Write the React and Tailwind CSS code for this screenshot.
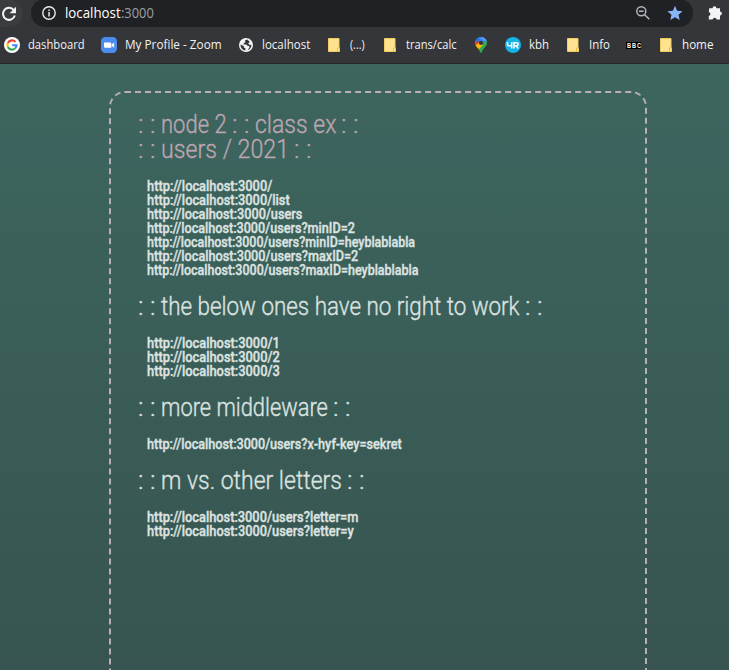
import React, { useLayoutEffect, useRef } from "react";

// Condenses or widens its text so that it takes exactly `w` pixels.
function Fit({ w, children }) {
  const ref = useRef(null);
  useLayoutEffect(() => {
    const el = ref.current;
    el.style.transform = `scaleX(${w / el.offsetWidth})`;
  }, [w]);
  return (
    <span className="block shrink-0" style={{ width: w }}>
      <span ref={ref} className="inline-block origin-left whitespace-pre align-top">
        {children}
      </span>
    </span>
  );
}

function Line({ parts }) {
  return (
    <span className="flex h-[25px] gap-[5px] [-webkit-text-stroke:0.35px]">
      {parts.map(([t, w], i) => (
        <Fit key={i} w={w}>{t}</Fit>
      ))}
    </span>
  );
}

function Links({ items }) {
  return (
    <ul className="my-[17px] pl-[8.500px] text-[15px] leading-[14px] font-medium text-[#dde3e0] [-webkit-text-stroke:0.4px]">
      {items.map(([t, w]) => (
        <li key={t} className="h-[14px]">
          <Fit w={w}>{"http://localhost:3000/" + t}</Fit>
        </li>
      ))}
    </ul>
  );
}

const Folder = () => (
  <svg className="block h-4 w-3 shrink-0" viewBox="0 0 12 16">
    <path d="M.5 1.500h10.500v9.500h.5v3.500h-11z" fill="#ffe391" stroke="#f2cd60" />
    <path d="M9.500 14.500v-3.500h2" fill="none" stroke="#e9bd45" />
  </svg>
);

const Google = () => (
  <svg className="block size-4 shrink-0" viewBox="0 0 16 16">
    <circle cx="8" cy="8" r="8" fill="#fff" />
    <g fill="none" strokeWidth="2.100">
      <path d="M11.500 4.900A4.600 4.600 0 0 0 3.900 6" stroke="#ea4335" />
      <path d="M3.900 6a4.600 4.600 0 0 0 0 4" stroke="#fbbc05" />
      <path d="M3.900 10a4.600 4.600 0 0 0 7.100 1.500" stroke="#34a853" />
      <path d="M11 11.500A4.600 4.600 0 0 0 12.600 8.200H8.200" stroke="#4285f4" />
    </g>
  </svg>
);

const Zoom = () => (
  <svg className="block size-4 shrink-0" viewBox="0 0 16 16">
    <rect width="16" height="16" rx="4.500" fill="#4a8cf0" />
    <path d="M3 5.500h6a1.300 1.300 0 0 1 1.300 1.300v3.900H4.300A1.300 1.300 0 0 1 3 9.400zM10.800 7.200 13.200 5.500v5.200l-2.400-1.700z" fill="#fff" />
  </svg>
);

const Globe = () => (
  <svg className="block size-[14px] shrink-0" viewBox="0 0 14 14">
    <circle cx="7" cy="7" r="7" fill="#f1f3f4" />
    <path d="M8.500 1.600 5.800 2.500 6.500 4.200 5 5 4.300 6.500h3.200l.8 1.200 1.900.3.300 1.600-2 2.600A5.500 5.500 0 0 0 12.400 7l-2-.2-1.200-1.400 1.500-1.300zM1.500 6.500a5.600 5.600 0 0 0 4.800 6l.3-1.900-1.500-.8-.4-1.900z" fill="#35363a" />
  </svg>
);

const Pin = () => (
  <svg className="block h-4 w-3 shrink-0" viewBox="0 0 12 16">
    <clipPath id="pin">
      <path d="M6 0a6 6 0 0 1 6 6c0 4-4.300 5.200-5.200 9.300q-.8 1.400-1.600 0C4.300 11.200 0 10 0 6a6 6 0 0 1 6-6z" />
    </clipPath>
    <g clipPath="url(#pin)">
      <path d="M0 0h12v16H0z" fill="#34a853" />
      <path d="M0 0h12v3L6 7z" fill="#4285f4" />
      <path d="M6 0h6v5L8 3z" fill="#4f9cf8" />
      <path d="M0 1.500 6 6 1 11H0z" fill="#ea4335" />
      <path d="m0 9 5-4 3 3-5 5z" fill="#fbbc04" />
      <path d="M0 0h3l2 3-3 3z" fill="#1a73e8" />
    </g>
    <circle cx="6" cy="5.900" r="2.100" fill="#35363a" />
  </svg>
);

const Yr = () => (
  <svg className="block size-4 shrink-0" viewBox="0 0 16 16">
    <circle cx="8" cy="8" r="8" fill="#14b4e8" />
    <g fill="none" stroke="#fff" strokeWidth="1.500">
      <path d="M2.500 5v2.700q0 1 1 1h3M6.700 5v6.500" />
      <path d="M9 11.500V5.700h2.800q1.400 0 1.400 1.500t-1.400 1.500H9M11 8.700l2.300 2.800" />
    </g>
  </svg>
);

const Bbc = () => (
  <span className="flex h-[7px] w-[15px] shrink-0 justify-center gap-px bg-black font-['Liberation_Sans'] text-[7px] leading-[7px] font-bold text-white">
    <Fit w={4}>B</Fit>
    <Fit w={4}>B</Fit>
    <Fit w={4}>C</Fit>
  </span>
);

// [icon, space before it, space before the label, label, label width]
const bookmarks = [
  [Google, 4, 8, "dashboard", 57],
  [Zoom, 16, 8, "My Profile - Zoom", 97],
  [Globe, 17, 9, "localhost", 48],
  [Folder, 18, 10, "(...)", 15],
  [Folder, 19, 10, "trans/calc", 51],
  [Pin, 18, 0, "", 0],
  [Yr, 18, 8, "kbh", 20],
  [Folder, 18, 10, "Info", 21],
  [Bbc, 16, 0, "", 0],
  [Folder, 19, 10, "home", 31],
];

function Toolbar() {
  return (
    <div className="flex h-[27px] items-start overflow-hidden bg-[#35363a]">
      <div className="-ml-[6px] flex h-[27px] w-[29px] shrink-0 items-center justify-end rounded-r-full bg-[#3b3c40] pr-[6px]">
        <svg className="block size-4" viewBox="0 0 16 16">
          <path d="M12.800 4.200A6 6 0 1 0 13.800 9.500" fill="none" stroke="#f1f3f4" strokeWidth="2" />
          <path d="M15 .8v6.400H8.600z" fill="#f1f3f4" />
        </svg>
      </div>
      <div className="mt-[-1px] ml-2 flex h-7 w-[662px] shrink-0 items-center rounded-full bg-[#202124] pl-[11px]">
        <svg className="block size-[14px]" viewBox="0 0 14 14">
          <circle cx="7" cy="7" r="6.200" fill="none" stroke="#e8eaed" strokeWidth="1.400" />
          <path d="M6.300 6h1.500v4.500H6.300zM6.300 3.400h1.500v1.500H6.300z" fill="#e8eaed" />
        </svg>
        <span className="ml-[9px] flex text-[14px] leading-5 text-white">
          <Fit w={56}>localhost</Fit>
          <span className="flex text-[#9aa0a6]"><Fit w={33}>:3000</Fit></span>
        </span>
        <svg className="ml-auto block size-[14px]" viewBox="0 0 14 14">
          <g fill="none" stroke="#b4b7bb" strokeWidth="1.500">
            <circle cx="5.300" cy="5.300" r="4.500" />
            <path d="m8.700 8.700 4.600 4.600M3 5.300h4.600" />
          </g>
        </svg>
        <svg className="mr-[10px] ml-[17px] block size-4" viewBox="0 0 16 16">
          <path d="m8 .7 2.100 5 5.500.5-4.100 3.600 1.200 5.300L8 12.300l-4.700 2.800 1.200-5.300L.4 6.200l5.500-.5z" fill="#8ab4f8" />
        </svg>
      </div>
      <svg className="mt-[5px] ml-[15px] block size-[15px] shrink-0" viewBox="0 0 15 15">
        <path d="M1.200 3.200h3.400a1.900 1.900 0 1 1 3.800 0H12v3.400a1.900 1.900 0 1 1 0 3.800V14.500H8.700a2.100 2.100 0 0 0-4.100 0H.8V11a2.100 2.100 0 0 0 0-4.100z" fill="#f1f3f4" />
      </svg>
    </div>
  );
}

export default function App() {
  return (
    <div className="flex h-[670px] w-[729px] flex-col overflow-hidden font-['Roboto',sans-serif]">
      <header className="shrink-0 font-['Open_Sans','Noto_Sans',sans-serif]">
        <Toolbar />
        <nav className="flex h-[37px] items-center overflow-hidden border-b border-[#242528] bg-[#35363a] text-[12px] leading-4 text-[#f1f3f4]">
          {bookmarks.map(([Icon, before, gap, label, w], i) => (
            <div key={i} className="flex shrink-0 items-center" style={{ paddingLeft: before, gap }}>
              <Icon />
              {label && <Fit w={w}>{label}</Fit>}
            </div>
          ))}
        </nav>
      </header>
      <div className="min-h-0 flex-1 overflow-hidden bg-linear-to-b from-[#3d665f] to-[#375450] pt-[27px] pl-[109px]">
        <main className="h-[700px] w-[538px] rounded-2xl border-2 border-dashed border-[#b9aeb9] pt-[19px] pl-[27px]">
          <h1 className="text-[25px] leading-[25px] font-light text-[#bba5b1]">
            <Line parts={[[": :", 18], ["node 2", 66], [": :", 18], ["class ex", 81], [": :", 18]]} />
            <Line parts={[[": :", 18], ["users / 2021", 128], [": :", 18]]} />
          </h1>
          <Links
            items={[
              ["", 125],
              ["list", 143],
              ["users", 155],
              ["users?minID=2", 208],
              ["users?minID=heyblablabla", 268],
              ["users?maxID=2", 211],
              ["users?maxID=heyblablabla", 271],
            ]}
          />
          <h2 className="text-[25px] leading-[25px] font-light text-[#dce3e0]">
            <Line parts={[[": :", 18], ["the below ones have no right to work", 359], [": :", 18]]} />
          </h2>
          <Links items={[["1", 133], ["2", 133], ["3", 133]]} />
          <h2 className="text-[25px] leading-[25px] font-light text-[#dce3e0]">
            <Line parts={[[": :", 18], ["more middleware", 167], [": :", 18]]} />
          </h2>
          <Links items={[["users?x-hyf-key=sekret", 255]]} />
          <h2 className="text-[25px] leading-[25px] font-light text-[#dce3e0]">
            <Line parts={[[": :", 18], ["m vs. other letters", 181], [": :", 18]]} />
          </h2>
          <Links items={[["users?letter=m", 211], ["users?letter=y", 207]]} />
        </main>
      </div>
    </div>
  );
}
